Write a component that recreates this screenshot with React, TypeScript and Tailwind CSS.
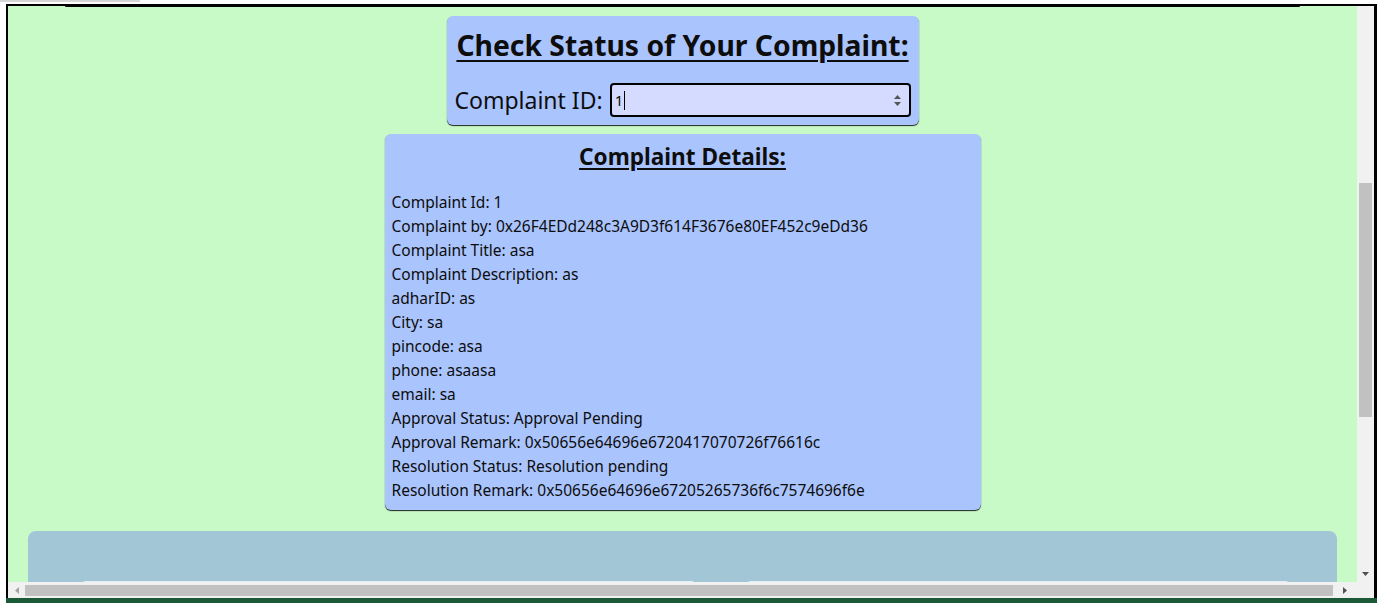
import React from "react";

const details: [string, string][] = [
  ["Complaint Id", "1"],
  ["Complaint by", "0x26F4EDd248c3A9D3f614F3676e80EF452c9eDd36"],
  ["Complaint Title", "asa"],
  ["Complaint Description", "as"],
  ["adharID", "as"],
  ["City", "sa"],
  ["pincode", "asa"],
  ["phone", "asaasa"],
  ["email", "sa"],
  ["Approval Status", "Approval Pending"],
  ["Approval Remark", "0x50656e64696e6720417070726f76616c"],
  ["Resolution Status", "Resolution pending"],
  ["Resolution Remark", "0x50656e64696e67205265736f6c7574696f6e"],
];

function Spinner() {
  return (
    <div className="flex flex-col items-center justify-center gap-[3px] pr-[8px]">
      <svg width="7" height="4" viewBox="0 0 7 4">
        <path d="M0 4 L3.5 0 L7 4 Z" fill="#555" />
      </svg>
      <svg width="7" height="4" viewBox="0 0 7 4">
        <path d="M0 0 L3.5 4 L7 0 Z" fill="#555" />
      </svg>
    </div>
  );
}

function StatusForm() {
  return (
    <div className="flex h-[109px] w-[472px] shrink-0 flex-col items-center rounded-md bg-[#aac4fd] shadow-[0_1px_1px_rgba(0,0,0,0.85)]">
      <h2 className="mt-[11px] text-[28.3px] font-bold leading-[36px] underline decoration-2 underline-offset-[4px]">
        Check Status of Your Complaint:
      </h2>
      <div className="mt-[20px] flex w-full items-center gap-[7px] pl-[8px]">
        <label className="text-[23px] leading-[34px]">Complaint ID:</label>
        <div className="flex h-[34px] w-[301px] items-stretch rounded-[4px] border-2 border-black bg-[#d4dbfe]">
          <div className="flex flex-1 items-center pl-[3px] text-[15px]">
            1<span className="ml-[1px] h-[19px] w-[1px] bg-black" />
          </div>
          <Spinner />
        </div>
      </div>
    </div>
  );
}

function DetailsCard() {
  return (
    <div className="mt-[9px] w-[596px] shrink-0 rounded-md bg-[#aac4fd] px-[7px] pb-[8px] pt-[8px] shadow-[0_1px_1px_rgba(0,0,0,0.85)]">
      <h3 className="text-center text-[22.6px] font-bold leading-[30px] underline decoration-2 underline-offset-[3px]">
        Complaint Details:
      </h3>
      <ul className="mt-[18px] text-[15.5px] leading-[24px]">
        {details.map(([k, v]) => (
          <li key={k}>
            {k}: {v}
          </li>
        ))}
      </ul>
    </div>
  );
}

export default function App() {
  return (
    <div className="flex h-[603px] w-[1377px] flex-col overflow-hidden bg-white font-['Noto_Sans',sans-serif] text-[#0d0d0d]">
      <div className="h-[4px] shrink-0">
        <div className="h-[2px] w-[140px] bg-[#d6d6d6]" />
      </div>
      <div className="ml-[6px] flex min-h-0 flex-1 flex-col">
        <div className="flex min-h-0 flex-1 border-l-2 border-r-[3px] border-t-2 border-black">
          <div className="flex min-w-0 flex-1 flex-col">
            {/* page body */}
            <div className="flex min-h-0 flex-1 flex-col items-center overflow-hidden bg-[#c8fac8]">
              {/* bottom edge of the header block scrolled out above */}
              <div className="h-[1px] w-[1235px] shrink-0 self-start ml-[57px] rounded-b bg-black" />
              <div className="h-[9px] shrink-0" />
              <StatusForm />
              <DetailsCard />
              <div className="mt-[21px] h-[240px] w-[1309px] shrink-0 rounded-t-lg bg-[#a3c6d6] pt-[50px]">
                <div className="flex gap-[48px] pl-[52px] pr-[46px]">
                  <div className="h-[40px] w-[617px] rounded-md border-t-2 border-[#e4edf7] bg-[#b5d0e0]" />
                  <div className="h-[40px] flex-1 rounded-md border-t-2 border-[#e4edf7] bg-[#b5d0e0]" />
                </div>
              </div>
            </div>
            {/* horizontal scrollbar */}
            <div className="flex h-[16px] shrink-0 items-center bg-[#f1f1f1]">
              <div className="flex w-[17px] justify-center">
                <svg width="4" height="7" viewBox="0 0 4 7">
                  <path d="M4 0 L0 3.5 L4 7 Z" fill="#a3a3a3" />
                </svg>
              </div>
              <div className="h-[11px] w-[1308px] bg-[#c1c1c1]" />
              <div className="flex flex-1 justify-center">
                <svg width="4" height="7" viewBox="0 0 4 7">
                  <path d="M0 0 L4 3.5 L0 7 Z" fill="#505050" />
                </svg>
              </div>
            </div>
          </div>
          {/* vertical scrollbar */}
          <div className="flex w-[17px] shrink-0 flex-col bg-[#f1f1f1]">
            <div className="flex flex-1 flex-col items-center">
              <div className="mt-[177px] h-[234px] w-[13px] bg-[#c1c1c1]" />
              <div className="mt-auto mb-[6px]">
                <svg width="7" height="4" viewBox="0 0 7 4">
                  <path d="M0 0 L3.5 4 L7 0 Z" fill="#505050" />
                </svg>
              </div>
            </div>
            <div className="h-[16px] bg-[#f1f1f1]" />
          </div>
        </div>
        <div className="h-[5px] shrink-0 bg-[#1b5a38]" />
      </div>
    </div>
  );
}
